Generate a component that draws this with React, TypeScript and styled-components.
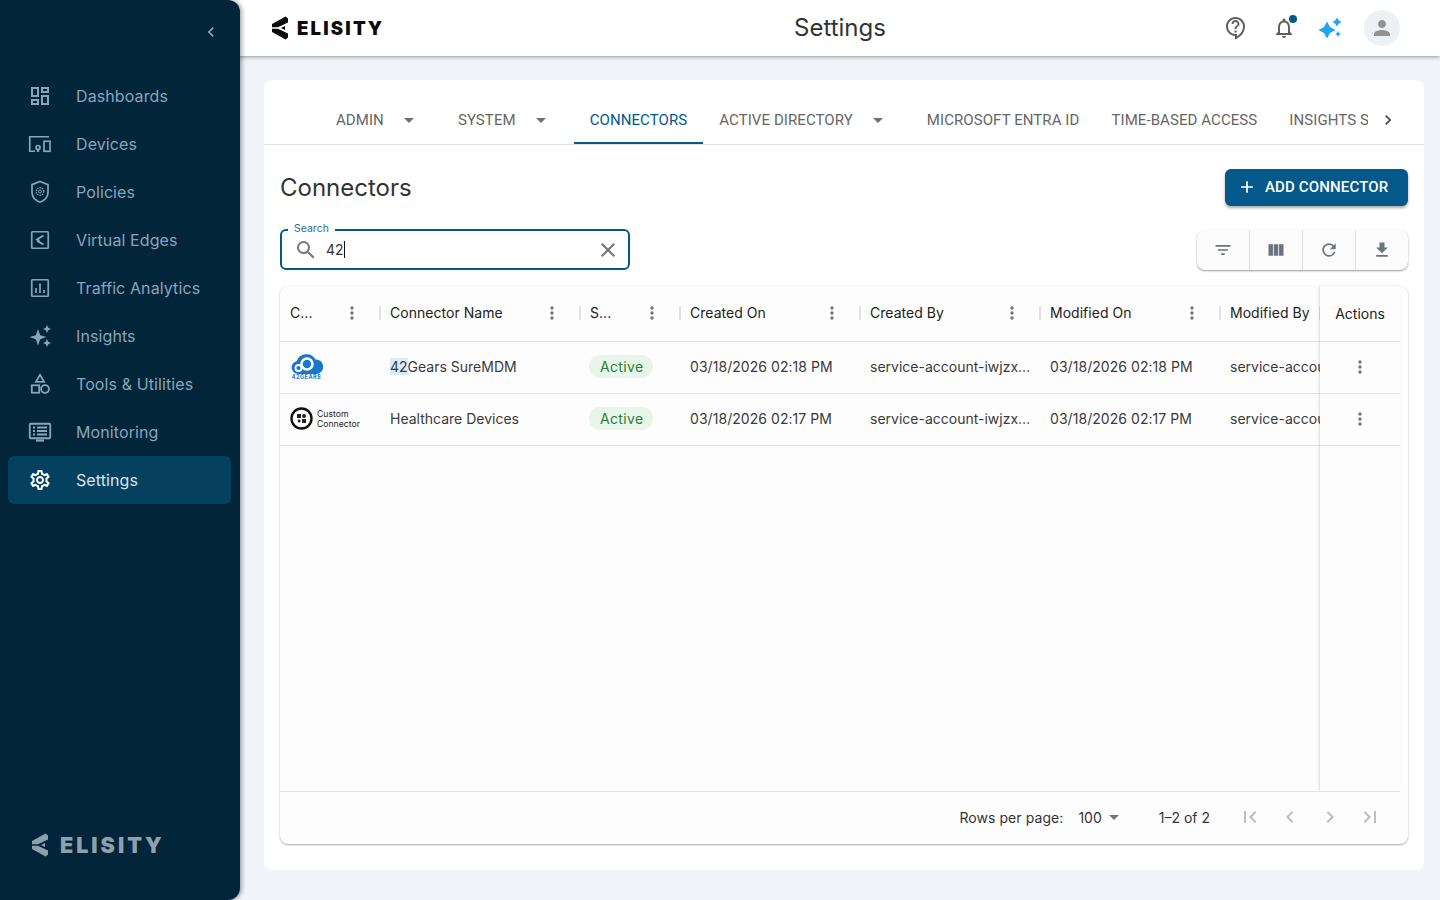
import React from 'react';
import styled, { createGlobalStyle } from 'styled-components';
import {
  MdOutlineDashboard, MdOutlineSettings, MdOutlineContactSupport, MdOutlineNotifications, MdPerson,
  MdSearch, MdClose, MdFilterList, MdViewColumn, MdRefresh, MdFileDownload, MdAdd, MdMoreVert,
  MdFirstPage, MdLastPage, MdChevronLeft, MdChevronRight, MdArrowDropDown,
} from 'react-icons/md';

const Global = createGlobalStyle`
  html, body { margin: 0; padding: 0; height: 100%; background: #f1f5f9; }
  #root { height: 100%; }
  * { box-sizing: border-box; }
  body { font-family: Inter, "Liberation Sans", sans-serif; color: #2b2b2b; }
`;

const Page = styled.div`display: flex; width: 1440px; height: 900px; overflow: hidden; background: #f1f5f9;`;

const Sidebar = styled.aside`
  position: relative; z-index: 2; flex: 0 0 240px; height: 900px; background: #032539;
  border-radius: 0 12px 12px 0; box-shadow: 2px 0 4px rgba(0,0,0,.35);
  display: flex; flex-direction: column; padding: 0 9px 0 8px;
`;
const Collapse = styled.div`
  height: 72px; display: flex; justify-content: flex-end; align-items: flex-start; padding: 22px 9px 0 0; color: #86a5bb;
  svg { display: block; width: 22px; height: 20px; }
`;
const Nav = styled.nav`display: flex; flex-direction: column; flex: 1;`;
const NavItem = styled.div<{ $active?: boolean }>`
  height: 48px; display: flex; align-items: center; border-radius: 6px;
  background: ${p => (p.$active ? '#06405f' : 'transparent')};
  color: ${p => (p.$active ? '#d6e4ee' : '#86a5bb')};
  font-size: 16px; letter-spacing: .1px;
`;
const NavIcon = styled.span<{ $active?: boolean }>`
  width: 24px; height: 24px; margin: 0 24px 0 20px; display: block; flex: none;
  color: ${p => (p.$active ? '#ffffff' : '#86a5bb')};
  svg { display: block; width: 24px; height: 24px; }
`;
const SideLogo = styled.div`
  height: 54px; margin-bottom: 28px; padding-left: 23px; display: flex; align-items: center; gap: 11px; color: #8fa0ad;
`;
const SideWord = styled.span`font: 900 21.5px Inter, sans-serif; letter-spacing: 3px;`;

const Main = styled.div`flex: 1; min-width: 0; margin-left: -16px; display: flex; flex-direction: column;`;
const Header = styled.header`
  position: relative; z-index: 1; height: 56px; flex: none; background: #fff; box-shadow: 0 1px 4px rgba(0,0,0,.4);
  display: grid; grid-template-columns: 1fr auto 1fr; align-items: center; padding: 0 40px 0 47px;
`;
const HeadLogo = styled.div`display: flex; align-items: center; gap: 8px; color: #0c0c0c;`;
const HeadWord = styled.span`font: 900 18.5px Inter, sans-serif; letter-spacing: 2.2px;`;
const Title = styled.h1`margin: 0; font: 400 24px Inter, sans-serif; color: #333; padding: 0 0 1px 9px;`;
const HeadIcons = styled.div`display: flex; align-items: center; justify-content: flex-end;`;
const HeadIcon = styled.span`
  position: relative; width: 24px; height: 24px; margin-right: 24px; color: #5f5f5f;
  &:nth-child(2) { margin-right: 20px; }
  svg { display: block; width: 24px; height: 24px; }
`;
const BellDot = styled.span`position: absolute; top: -1px; right: -1px; width: 8px; height: 8px; border-radius: 50%; background: #04598a;`;
const Sparkle = styled.span`width: 28px; height: 24px; margin-right: 20px; svg { display: block; }`;
const Avatar = styled.span`
  width: 36px; height: 36px; border-radius: 50%; background: #ebf1f4; color: #929292; display: flex; align-items: center; justify-content: center;
  svg { width: 24px; height: 24px; }
`;

const Content = styled.main`flex: 1; padding: 24px 16px 30px 40px; min-height: 0;`;
const Card = styled.section`height: 790px; background: #fff; border-radius: 8px; display: flex; flex-direction: column; padding: 16px 16px 25px;`;
const TabsBar = styled.div`
  flex: none; height: 49px; margin: 0 -16px; padding: 0 16px 0 56px; border-bottom: 1px solid #e0e0e0; display: flex; 
`;
const TabsTrack = styled.div`flex: 1; display: flex; overflow: hidden; min-width: 0;`;
const Tab = styled.div<{ $active?: boolean }>`
  flex: none; height: 48px; padding: 0 16px; display: flex; align-items: center;
  font: 400 15px Roboto, sans-serif; letter-spacing: .08px; color: ${p => (p.$active ? '#04598a' : '#666')};
  box-shadow: ${p => (p.$active ? 'inset 0 -2px 0 #04598a' : 'none')};
  svg { width: 24px; height: 24px; margin: 0 5px 0 13px; color: #6f6f6f; display: block; }
`;
const TabScroll = styled.div`
  flex: none; width: 40px; height: 48px; display: flex; align-items: center; justify-content: center; color: #444;
  svg { width: 20px; height: 20px; }
`;
const TitleRow = styled.div`flex: none; display: flex; align-items: center; justify-content: space-between; margin-top: 24px; height: 37px;`;
const H2 = styled.h2`margin: 0; padding-bottom: 1px; font: 400 24px Inter, sans-serif; color: #333;`;
const AddBtn = styled.div`
  width: 183px; height: 37px; border-radius: 6px; background: #04598a; color: #fff; display: flex; align-items: center; padding: 0 0 1px 12px;
  font: 500 15px Roboto, sans-serif; letter-spacing: .15px; box-shadow: 0 2px 3px rgba(0,0,0,.35);
  svg { width: 20px; height: 20px; margin-right: 8px; }
`;
const ToolRow = styled.div`flex: none; display: flex; align-items: center; justify-content: space-between; margin-top: 23px; height: 41px;`;
const SearchBox = styled.div`
  position: relative; width: 350px; height: 41px; border: 2px solid #04598a; border-radius: 6px; display: flex; align-items: center; padding: 0 8px 0 12px; color: #757575;
  svg { width: 24px; height: 24px; display: block; flex: none; }
`;
const SearchLabel = styled.span`
  position: absolute; left: 6px; top: -9px; padding: 0 6px; background: #fff; font: 400 10.5px/14px Inter, sans-serif; color: #2f6f94;
`;
const SearchValue = styled.span`flex: 1; margin-left: 8px; font: 400 14px/20px Inter, sans-serif; color: #333;`;
const Caret = styled.span`display: inline-block; width: 1px; height: 17px; background: #111; vertical-align: -3px;`;
const ToolGroup = styled.div`
  display: flex; height: 40px; border-radius: 8px; background: #fcfcfc; box-shadow: 0 1px 2px rgba(0,0,0,.4);
`;
const ToolBtn = styled.div`
  width: 53px; display: flex; align-items: center; justify-content: center; color: #6b7280; border-left: 1px solid #e0e0e0;
  &:first-child { border-left: 0; width: 52px; }
  svg { width: 20px; height: 20px; }
`;

const Paper = styled.div`
  margin-top: 16px; flex: 1; min-height: 0; border-radius: 8px; background: #fdfdfd; box-shadow: 0 1px 2px rgba(0,0,0,.35);
  padding-right: 8px; display: flex; flex-direction: column; margin-bottom: 1px;
`;
const TableArea = styled.div`flex: 1; min-height: 0; display: flex;`;
const ScrollPart = styled.div`flex: 1; min-width: 0; overflow: hidden;`;
const Pinned = styled.div`flex: 0 0 80px; box-shadow: -1px 0 2px rgba(0,0,0,.14);`;
const GridRow = styled.div<{ $head?: boolean }>`
  display: grid; grid-template-columns: 100px 200px 100px 180px 180px 180px 100px;
  height: ${p => (p.$head ? '56px' : '52px')}; border-bottom: 1px solid #e3e3e3; align-items: center;
`;
const HeadCell = styled.div`
  display: flex; align-items: center; height: 100%; padding: 0 0 2px 10px; font: 400 14px Inter, sans-serif; letter-spacing: .03px; color: #222; min-width: 0;
`;
const HeadLabel = styled.span`flex: 1; min-width: 0; white-space: nowrap; overflow: hidden;`;
const Kebab = styled.span`
  flex: none; width: 20px; height: 20px; margin-right: 17px; color: #757575; svg { display: block; width: 20px; height: 20px; }
`;
const Sep = styled.span`flex: none; width: 2px; height: 14px; margin-right: -1px; background: #e2e2e2;`;
const Cell = styled.div<{ $clip?: boolean }>`
  padding: 0 ${p => (p.$clip ? '0' : '8px')} 2px 10px; font: 400 14px Inter, sans-serif; color: #3a3a3a; white-space: nowrap; overflow: hidden; min-width: 0;
  text-overflow: ${p => (p.$clip ? 'clip' : 'ellipsis')};
`;
const DateCell = styled(Cell)`letter-spacing: .05px;`;
const Mark = styled.mark`background: #d9ebf9; color: inherit;`;
const Chip = styled.span`
  display: inline-block; height: 23px; line-height: 23px; padding: 0 9px 0 11px; margin-left: -1px; border-radius: 12px; background: #e8f5e9; color: #2e7d32; font-size: 14px; letter-spacing: .35px;
`;
const PinHead = styled.div`
  height: 56px; border-bottom: 1px solid #e3e3e3; display: flex; align-items: center; justify-content: center; font: 400 14px Inter, sans-serif; color: #222;
`;
const PinCell = styled.div`
  height: 52px; padding-bottom: 2px; border-bottom: 1px solid #e3e3e3; display: flex; align-items: center; justify-content: center; color: #757575;
  svg { width: 20px; height: 20px; display: block; }
`;
const Footer = styled.div`
  flex: none; height: 53px; padding: 0 10px 2px 0; border-top: 1px solid #e3e3e3; display: flex; align-items: center; justify-content: flex-end; font: 400 14px Inter, sans-serif; color: #333;
`;
const Rows = styled.span`margin-right: 15px; letter-spacing: .07px;`;
const PerPage = styled.span`display: flex; align-items: center; margin-right: 33px; svg { width: 24px; height: 24px; color: #757575; margin-left: 0; }`;
const Count = styled.span`margin-right: 20px;`;
const PageBtn = styled.span`
  width: 40px; height: 40px; display: flex; align-items: center; justify-content: center; color: #bdbdbd;
  svg { width: 24px; height: 24px; display: block; }
`;
const BrandCell = styled.div`padding: 0 0 2px 10px; display: flex; align-items: center; gap: 4px;`;
const GearsBox = styled.div`display: flex; flex-direction: column; align-items: center; width: 35px; margin-left: -1px;`;
const GearsText = styled.span`font: 700 5.5px/6px Inter, sans-serif; color: #1976c9; letter-spacing: .5px; margin-top: -1px;`;
const CustomText = styled.span`font: 400 8.6px/10px Inter, sans-serif; color: #222; letter-spacing: .03px;`;

const ElisityMark = () => (
  <svg width={18} height={24} viewBox="0 0 18 24" fill="currentColor">
    <path d="M14.5 .6 17 2.6V6.6L7 11.2H1V8Z" />
    <path d="M14.5 23.4 17 21.4V17.4L7 12.800H1V16Z" />
    <path d="M10 12 14 10V14Z" />
  </svg>
);

const I = {
  devices: (
    <svg viewBox="0 0 24 24" fill="none" stroke="currentColor" strokeWidth="1.7">
      <path d="M21 4.75H1.75V19.25H7" />
      <circle cx="10" cy="15.5" r="2" />
      <path d="M10 17.5V20" strokeWidth="2.200" />
      <rect x="16" y="9.25" width="6" height="10" />
    </svg>
  ),
  shield: (
    <svg viewBox="0 0 24 24" fill="none" stroke="currentColor" strokeWidth="1.7">
      <path d="M12 1.500 20 4.700V12c0 4.600-3 8.300-8 10.300C7 20.300 4 16.600 4 12V4.700Z" />
      <circle cx="12" cy="11.500" r="3.800" strokeDasharray="1.600 .8" strokeWidth="1.200" />
      <circle cx="12" cy="11.500" r="1.500" strokeWidth="1" />
    </svg>
  ),
  edge: (
    <svg viewBox="0 0 24 24" fill="none" stroke="currentColor" strokeWidth="1.7">
      <rect x="3.750" y="3.750" width="16.500" height="16.500" rx="1" />
      <path d="M15.500 7.500 9 11.500l2.500 1.500M15.500 16.500 9 12.800" strokeWidth="2" />
    </svg>
  ),
  traffic: (
    <svg viewBox="0 0 24 24" fill="none" stroke="currentColor" strokeWidth="1.7">
      <rect x="3.750" y="3.750" width="16.500" height="16.500" rx="1" />
      <path d="M8 12v5M12 7.500V17M16 14v3" />
    </svg>
  ),
  insights: (
    <svg viewBox="0 0 24 24" fill="currentColor">
      <path d="M10 5l2.200 6.300L18.500 13l-6.300 2.200L10 21.500l-2.200-6.300L1.500 13l6.300-1.700Z" />
      <path d="M19 1l1.200 2.800L23 5l-2.800 1.200L19 9l-1.200-2.800L15 5l2.800-1.200Z" />
      <path d="M19 15l1.200 2.800L23 19l-2.800 1.200L19 23l-1.200-2.800L15 19l2.800-1.200Z" />
    </svg>
  ),
  tools: (
    <svg viewBox="0 0 24 24" fill="none" stroke="currentColor" strokeWidth="1.800">
      <path d="M12 2.800 16 9.800H8Z" />
      <rect x="3.800" y="13.300" width="7.400" height="7.400" />
      <circle cx="17" cy="17" r="3.900" />
    </svg>
  ),
  monitor: (
    <svg viewBox="0 0 24 24" fill="none" stroke="currentColor" strokeWidth="1.800">
      <rect x="1.750" y="3.750" width="20.500" height="14.500" rx="1" />
      <path d="M5 7.500h2M9 7.500h10M5 11h2M9 11h10M5 14.500h2M9 14.500h10" />
      <path d="M8 20.500h8" strokeWidth="2.200" />
    </svg>
  ),
};

const nav: [string, React.ReactNode][] = [
  ['Dashboards', <MdOutlineDashboard />],
  ['Devices', I.devices],
  ['Policies', I.shield],
  ['Virtual Edges', I.edge],
  ['Traffic Analytics', I.traffic],
  ['Insights', I.insights],
  ['Tools & Utilities', I.tools],
  ['Monitoring', I.monitor],
];

const cols: [string, boolean][] = [
  ['C...', true], ['Connector Name', true], ['S...', true], ['Created On', true], ['Created By', true], ['Modified On', true], ['Modified By', false],
];

const SA = 'service-account-iwjzxabcdefgh';

export default function App() {
  return (
    <Page>
      <Global />
      <Sidebar>
        <Collapse><MdChevronLeft /></Collapse>
        <Nav>
          {nav.map(([t, ic]) => (
            <NavItem key={t}><NavIcon>{ic}</NavIcon>{t}</NavItem>
          ))}
          <NavItem $active><NavIcon $active><MdOutlineSettings /></NavIcon>Settings</NavItem>
        </Nav>
        <SideLogo><ElisityMark /><SideWord>ELISITY</SideWord></SideLogo>
      </Sidebar>
      <Main>
        <Header>
          <HeadLogo><ElisityMark /><HeadWord>ELISITY</HeadWord></HeadLogo>
          <Title>Settings</Title>
          <HeadIcons>
            <HeadIcon><MdOutlineContactSupport /></HeadIcon>
            <HeadIcon><MdOutlineNotifications /><BellDot /></HeadIcon>
            <Sparkle>
              <svg width="28" height="24" viewBox="0 0 28 24" fill="#1ea7f0">
                <path d="M11 5.500 14 11 19.500 14 14 17 11 22.500 8 17 2.500 14 8 11Z" />
                <path d="M21 1.500 22.700 4.300 25.500 6 22.700 7.700 21 10.500 19.300 7.700 16.500 6 19.300 4.300Z" />
                <path d="M22 15 23 17 25 18 23 19 22 21 21 19 19 18 21 17Z" />
              </svg>
            </Sparkle>
            <Avatar><MdPerson /></Avatar>
          </HeadIcons>
        </Header>
        <Content>
          <Card>
            <TabsBar>
              <TabsTrack>
                <Tab>ADMIN<MdArrowDropDown /></Tab>
                <Tab>SYSTEM<MdArrowDropDown /></Tab>
                <Tab $active>CONNECTORS</Tab>
                <Tab>ACTIVE DIRECTORY<MdArrowDropDown /></Tab>
                <Tab>MICROSOFT ENTRA ID</Tab>
                <Tab>TIME-BASED ACCESS</Tab>
                <Tab>INSIGHTS SETTINGS</Tab>
              </TabsTrack>
              <TabScroll><MdChevronRight /></TabScroll>
            </TabsBar>
            <TitleRow>
              <H2>Connectors</H2>
              <AddBtn><MdAdd />ADD CONNECTOR</AddBtn>
            </TitleRow>
            <ToolRow>
              <SearchBox>
                <SearchLabel>Search</SearchLabel>
                <MdSearch />
                <SearchValue>42<Caret /></SearchValue>
                <MdClose />
              </SearchBox>
              <ToolGroup>
                <ToolBtn><MdFilterList /></ToolBtn>
                <ToolBtn><MdViewColumn /></ToolBtn>
                <ToolBtn><MdRefresh /></ToolBtn>
                <ToolBtn><MdFileDownload /></ToolBtn>
              </ToolGroup>
            </ToolRow>
            <Paper>
              <TableArea>
                <ScrollPart>
                  <GridRow $head>
                    {cols.map(([c, k]) => (
                      <HeadCell key={c}>
                        <HeadLabel>{c}</HeadLabel>
                        {k && <Kebab><MdMoreVert /></Kebab>}
                        <Sep />
                      </HeadCell>
                    ))}
                  </GridRow>
                  <GridRow>
                    <BrandCell>
                      <GearsBox>
                        <svg width="34" height="22" viewBox="0 0 34 22" fill="#1976c9">
                          <path d="M8 21a6.500 6.500 0 0 1-1.500-12.800A10.500 10.500 0 0 1 25.500 6.500a7.200 7.200 0 0 1 1 14.500Z" />
                          <circle cx="17" cy="11" r="5.500" fill="none" stroke="#fff" strokeWidth="2.600" />
                          <circle cx="8.500" cy="15" r="3" fill="none" stroke="#fff" strokeWidth="1.800" />
                        </svg>
                        <GearsText>42GEARS</GearsText>
                      </GearsBox>
                    </BrandCell>
                    <Cell><Mark>42</Mark>Gears SureMDM</Cell>
                    <Cell><Chip>Active</Chip></Cell>
                    <DateCell>03/18/2026 02:18 PM</DateCell>
                    <Cell>{SA}</Cell>
                    <DateCell>03/18/2026 02:18 PM</DateCell>
                    <Cell $clip>{SA}</Cell>
                  </GridRow>
                  <GridRow>
                    <BrandCell>
                      <svg width="23" height="23" viewBox="0 0 23 23">
                        <circle cx="11.500" cy="11.500" r="10" fill="#fff" stroke="#111" strokeWidth="2.400" />
                        <rect x="7" y="7" width="4" height="4" fill="#222" />
                        <circle cx="14" cy="9" r="2" fill="#222" />
                        <rect x="12" y="12" width="4" height="4" fill="#222" />
                        <path d="M9 12l2 2-2 2-1.500-2Z" fill="#222" />
                      </svg>
                      <CustomText>Custom<br />Connector</CustomText>
                    </BrandCell>
                    <Cell>Healthcare Devices</Cell>
                    <Cell><Chip>Active</Chip></Cell>
                    <DateCell>03/18/2026 02:17 PM</DateCell>
                    <Cell>{SA}</Cell>
                    <DateCell>03/18/2026 02:17 PM</DateCell>
                    <Cell $clip>{SA}</Cell>
                  </GridRow>
                </ScrollPart>
                <Pinned>
                  <PinHead>Actions</PinHead>
                  <PinCell><MdMoreVert /></PinCell>
                  <PinCell><MdMoreVert /></PinCell>
                </Pinned>
              </TableArea>
              <Footer>
                <Rows>Rows per page:</Rows>
                <PerPage>100<MdArrowDropDown /></PerPage>
                <Count>1–2 of 2</Count>
                <PageBtn><MdFirstPage /></PageBtn>
                <PageBtn><MdChevronLeft /></PageBtn>
                <PageBtn><MdChevronRight /></PageBtn>
                <PageBtn><MdLastPage /></PageBtn>
              </Footer>
            </Paper>
          </Card>
        </Content>
      </Main>
    </Page>
  );
}
